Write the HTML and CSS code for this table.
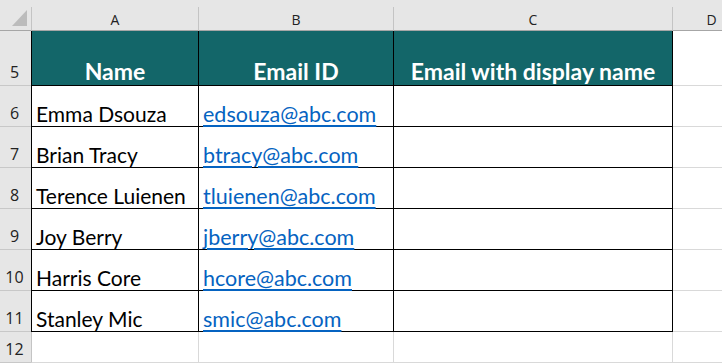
FILE: index.html
```html
<!DOCTYPE html>
<html>
<head>
<meta charset="utf-8">
<link rel="stylesheet" href="styles.css">
</head>
<body>
<div class="strip"></div>
<div class="sheet">
  <div class="corner"><span class="tri"></span></div>
  <div class="colhead first">A</div>
  <div class="colhead">B</div>
  <div class="colhead">C</div>
  <div class="colhead">D</div>

  <div class="rowhead tall">5</div>
  <div class="hcell first">Name</div>
  <div class="hcell">Email ID</div>
  <div class="hcell">Email with display name</div>
  <div class="dcell"></div>

  <div class="rowhead">6</div>
  <div class="cell first">Emma Dsouza</div>
  <div class="cell"><a class="link">edsouza@abc.com</a></div>
  <div class="cell"></div>
  <div class="dcell"></div>

  <div class="rowhead">7</div>
  <div class="cell first">Brian Tracy</div>
  <div class="cell"><a class="link">btracy@abc.com</a></div>
  <div class="cell"></div>
  <div class="dcell"></div>

  <div class="rowhead">8</div>
  <div class="cell first">Terence Luienen</div>
  <div class="cell"><a class="link">tluienen@abc.com</a></div>
  <div class="cell"></div>
  <div class="dcell"></div>

  <div class="rowhead">9</div>
  <div class="cell first">Joy Berry</div>
  <div class="cell"><a class="link">jberry@abc.com</a></div>
  <div class="cell"></div>
  <div class="dcell"></div>

  <div class="rowhead">10</div>
  <div class="cell first">Harris Core</div>
  <div class="cell"><a class="link">hcore@abc.com</a></div>
  <div class="cell"></div>
  <div class="dcell"></div>

  <div class="rowhead">11</div>
  <div class="cell first">Stanley Mic</div>
  <div class="cell"><a class="link">smic@abc.com</a></div>
  <div class="cell"></div>
  <div class="dcell"></div>

  <div class="rowhead">12</div>
  <div class="ecell first"></div>
  <div class="ecell"></div>
  <div class="ecell"></div>
  <div class="ecell"></div>
</div>
</body>
</html>
```
FILE: styles.css
```css
* { box-sizing: border-box; }
html, body { margin: 0; padding: 0; background: #ffffff; overflow: hidden; }
body { width: 722px; height: 364px; font-family: Lato, "Liberation Sans", sans-serif; color: #000; }

.strip { height: 7px; background: #e6e6e6; }

.sheet {
  display: grid;
  grid-template-columns: 31px 168px 195px 279px 78px;
  grid-template-rows: 24px 55px repeat(6, 41px) 31px;
}

.corner {
  background: #e6e6e6;
  border-bottom: 1px solid #a6a6a6;
  display: flex;
  align-items: flex-end;
  justify-content: flex-end;
  padding: 0 4px 4px 0;
}
.tri {
  width: 15px; height: 16px;
  background: #bcbcbc;
  clip-path: polygon(100% 0, 100% 100%, 0 100%);
}

.colhead {
  background: #e6e6e6;
  border-right: 1px solid #c4c4c4;
  border-bottom: 1px solid #a6a6a6;
  display: flex;
  align-items: center;
  justify-content: center;
  font-family: "Open Sans", "Liberation Sans", sans-serif;
  font-size: 14px;
  color: #222;
  padding-top: 1px;
}
.colhead.first { border-left: 1px solid #c4c4c4; }

.rowhead {
  background: #e6e6e6;
  border-bottom: 1px solid #c8c8c8;
  display: flex;
  align-items: flex-end;
  justify-content: center;
  font-family: "Open Sans", "Liberation Sans", sans-serif;
  font-size: 16px;
  line-height: 20px;
  color: #222;
  padding: 0 2px 3px 0;
}

.hcell {
  background: #136669;
  color: #ffffff;
  font-weight: 700;
  font-size: 23px;
  line-height: 26px;
  border-right: 1px solid #000;
  border-bottom: 1px solid #000;
  display: flex;
  align-items: flex-end;
  justify-content: center;
  padding-bottom: 1px;
  white-space: nowrap;
}
.hcell.first, .cell.first { border-left: 1px solid #000; }

.cell {
  border-right: 1px solid #000;
  border-bottom: 1px solid #000;
  display: flex;
  align-items: flex-end;
  padding: 0 0 0 4px;
  font-size: 21px;
  line-height: 24px;
  white-space: nowrap;
}

.link {
  color: #0563c1;
  font-size: 21.5px;
  text-decoration: underline;
  text-decoration-thickness: 2px;
  text-underline-offset: 3px;
}

.dcell {
  border-right: 1px solid #d9d9d9;
  border-bottom: 1px solid #d9d9d9;
}
.ecell {
  border-right: 1px solid #d9d9d9;
  border-bottom: 1px solid #d9d9d9;
}
.ecell.first { border-left: 1px solid #c4c4c4; }
```
